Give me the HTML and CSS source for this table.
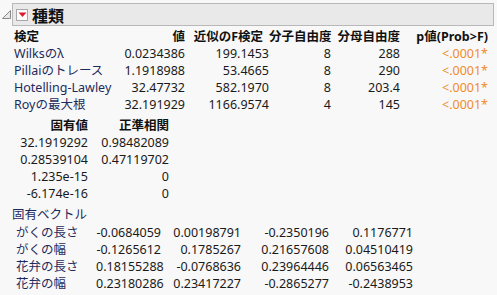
FILE: index.html
```html
<!DOCTYPE html>
<html lang="ja">
<head>
<meta charset="utf-8">
<title>種類</title>
<link rel="stylesheet" href="styles.css">
</head>
<body>
<div class="report">
  <div class="outline">
    <svg class="disclose" width="9" height="9" viewBox="0 0 9 9"><path d="M8.5 0.5 L8.5 8.5 L0.5 8.5 Z" fill="#e8e8e8" stroke="#8a8a8a" stroke-width="1"/></svg>
    <div class="titlebar">
      <span class="menu-btn"><svg width="9" height="6" viewBox="0 0 9 6"><path d="M0.5 0.5 L8.5 0.5 L4.5 5 Z" fill="#e0182a"/></svg></span>
      <span class="title">種類</span>
    </div>
  </div>

  <div class="tests">
    <div class="th left">検定</div>
    <div class="th">値</div>
    <div class="th fhead">近似のF検定</div>
    <div class="th">分子自由度</div>
    <div class="th">分母自由度</div>
    <div class="th">p値(Prob&gt;F)</div>

    <div class="lbl">Wilksのλ</div><div class="num">0.0234386</div><div class="num">199.1453</div><div class="num">8</div><div class="num">288</div><div class="num p">&lt;.0001*</div>
    <div class="lbl">Pillaiのトレース</div><div class="num">1.1918988</div><div class="num">53.4665</div><div class="num">8</div><div class="num">290</div><div class="num p">&lt;.0001*</div>
    <div class="lbl">Hotelling-Lawley</div><div class="num">32.47732</div><div class="num">582.1970</div><div class="num">8</div><div class="num">203.4</div><div class="num p">&lt;.0001*</div>
    <div class="lbl">Royの最大根</div><div class="num">32.191929</div><div class="num">1166.9574</div><div class="num">4</div><div class="num">145</div><div class="num p">&lt;.0001*</div>
  </div>

  <div class="eigen">
    <div class="th">固有値</div><div class="th">正準相関</div>
    <div class="num">32.1919292</div><div class="num">0.98482089</div>
    <div class="num">0.28539104</div><div class="num">0.47119702</div>
    <div class="num">1.235e-15</div><div class="num">0</div>
    <div class="num">-6.174e-16</div><div class="num">0</div>
  </div>

  <div class="vec-title">固有ベクトル</div>
  <div class="vectors">
    <div class="lbl2">がくの長さ</div><div class="num">-0.0684059</div><div class="num">0.00198791</div><div class="num">-0.2350196</div><div class="num">0.1176771</div>
    <div class="lbl2">がくの幅</div><div class="num">-0.1265612</div><div class="num">0.1785267</div><div class="num">0.21657608</div><div class="num">0.04510419</div>
    <div class="lbl2">花弁の長さ</div><div class="num">0.18155288</div><div class="num">-0.0768636</div><div class="num">0.23964446</div><div class="num">0.06563465</div>
    <div class="lbl2">花弁の幅</div><div class="num">0.23180286</div><div class="num">0.23417227</div><div class="num">-0.2865277</div><div class="num">-0.2438953</div>
  </div>
</div>
</body>
</html>
```

FILE: styles.css
```css
html, body {
  margin: 0;
  padding: 0;
  background: #f8f8f8;
}
body {
  font-family: "Noto Sans", "Noto Sans CJK JP", sans-serif;
  font-size: 12.5px;
  color: #1a1a1a;
  width: 497px;
  height: 295px;
  overflow: hidden;
}
.report {
  padding-top: 3px;
}
.outline {
  display: flex;
  align-items: flex-start;
}
.disclose {
  margin: 7px 0 0 2px;
  flex: none;
}
.titlebar {
  margin-left: 1px;
  width: 480px;
  height: 21px;
  border: 1px solid #b8b8b8;
  background: #e9e9e9;
  display: flex;
  align-items: center;
}
.menu-btn {
  width: 11px;
  height: 11px;
  margin-left: 3px;
  border: 1px solid #a8a8a8;
  background: #fdfdfd;
  display: flex;
  align-items: center;
  justify-content: center;
  box-sizing: border-box;
  width: 12px;
  height: 12px;
}
.title {
  margin-left: 4px;
  font-family: "Noto Sans CJK JP", sans-serif;
  font-weight: 700;
  font-size: 16px;
  line-height: 20px;
  color: #111;
}
.tests {
  display: grid;
  grid-template-columns: 110px 61px 84px 62px 69px 88px;
  grid-auto-rows: 17px;
  line-height: 17px;
  margin: 2px 0 0 14px;
}
.th {
  font-weight: 700;
  text-align: right;
  color: #111;
  white-space: nowrap;
}
.th.left {
  text-align: left;
}
.th.fhead {
  padding-right: 6px;
}
.tests .th {
  margin-bottom: 1px;
}
.lbl, .lbl2 {
  color: #1f2a5c;
  white-space: nowrap;
}
.num {
  text-align: right;
  white-space: nowrap;
  color: #1a1a1a;
}
.num.p {
  color: #f08c28;
}
.eigen {
  display: grid;
  grid-template-columns: 74px 81px;
  grid-auto-rows: 17px;
  line-height: 17px;
  margin: 4px 0 0 14px;
}
.vec-title {
  margin: 4px 0 0 12px;
  line-height: 17px;
  color: #1f2a5c;
}
.vectors {
  display: grid;
  grid-template-columns: 80px 65px 80px 88px 84px;
  grid-auto-rows: 17px;
  line-height: 17px;
  margin: 1px 0 0 16px;
}
```
